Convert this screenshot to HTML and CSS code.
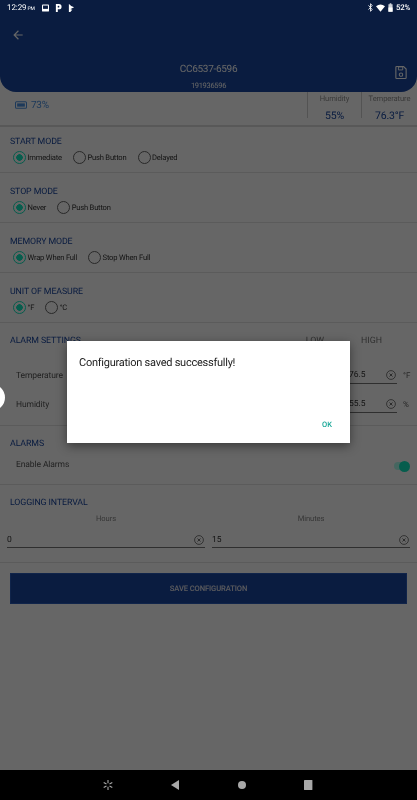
FILE: index.html
```html
<!DOCTYPE html>
<html lang="en">
<head>
<meta charset="utf-8">
<title>Configuration</title>
<link rel="stylesheet" href="styles.css">
</head>
<body>
<div class="device">
  <main class="screen">
    <header class="header">
      <div class="statusbar-space"></div>
      <svg class="back" viewBox="0 0 24 24"><path d="M20 11H7.800l5.600-5.600L12 4l-8 8 8 8 1.400-1.400L7.800 13H20z"/></svg>
      <div class="title">CC6537-6596</div>
      <div class="serial">191936596</div>
      <svg class="save" viewBox="0 0 14 16"><path d="M2 1h8l3 3v10a1 1 0 0 1-1 1H2a1 1 0 0 1-1-1V2a1 1 0 0 1 1-1z" fill="none" stroke="currentColor" stroke-width="1.300"/><path d="M4 1.500h5v3.500H4z" fill="none" stroke="currentColor" stroke-width="1.100"/><circle cx="7" cy="10.500" r="2" fill="none" stroke="currentColor" stroke-width="1.200"/></svg>
    </header>

    <section class="info">
      <div class="battery">
        <svg class="batt-icon" viewBox="0 0 14 9"><rect x="0.600" y="0.600" width="12.800" height="7.800" rx="1.200" fill="none" stroke="currentColor" stroke-width="1.200"/><rect x="2.500" y="2.600" width="9" height="3.800" fill="currentColor"/></svg>
        <span>73%</span>
      </div>
      <div class="stat stat-h"><div class="stat-label">Humidity</div><div class="stat-value">55%</div></div>
      <div class="stat stat-t"><div class="stat-label">Temperature</div><div class="stat-value">76.3°F</div></div>
    </section>

    <section class="group group-first">
      <h2 class="heading">START MODE</h2>
      <div class="radios">
        <span class="radio on">Immediate</span>
        <span class="radio">Push Button</span>
        <span class="radio">Delayed</span>
      </div>
    </section>
    <section class="group">
      <h2 class="heading">STOP MODE</h2>
      <div class="radios">
        <span class="radio on">Never</span>
        <span class="radio">Push Button</span>
      </div>
    </section>
    <section class="group">
      <h2 class="heading">MEMORY MODE</h2>
      <div class="radios">
        <span class="radio on">Wrap When Full</span>
        <span class="radio">Stop When Full</span>
      </div>
    </section>
    <section class="group">
      <h2 class="heading">UNIT OF MEASURE</h2>
      <div class="radios">
        <span class="radio on">°F</span>
        <span class="radio">°C</span>
      </div>
    </section>

    <section class="alarm">
      <div class="alarm-head">
        <h2 class="heading">ALARM SETTINGS</h2>
        <span class="col col-low">LOW</span>
        <span class="col col-high">HIGH</span>
      </div>
      <div class="alarm-row">
        <span class="row-label">Temperature</span>
        <div class="field small"><span>76.5</span><svg class="clear" viewBox="0 0 12 12"><use href="#x"/></svg></div>
        <span class="unit">°F</span>
      </div>
      <div class="alarm-row">
        <span class="row-label">Humidity</span>
        <div class="field small"><span>55.5</span><svg class="clear" viewBox="0 0 12 12"><use href="#x"/></svg></div>
        <span class="unit">%</span>
      </div>
    </section>

    <section class="alarms">
      <h2 class="heading">ALARMS</h2>
      <div class="enable">
        <span class="row-label">Enable Alarms</span>
        <span class="switch"><span class="knob"></span></span>
      </div>
    </section>

    <section class="logging">
      <h2 class="heading">LOGGING INTERVAL</h2>
      <div class="log-cols">
        <div class="log-col">
          <div class="log-label">Hours</div>
          <div class="field"><span>0</span><svg class="clear" viewBox="0 0 12 12"><use href="#x"/></svg></div>
        </div>
        <div class="log-col">
          <div class="log-label">Minutes</div>
          <div class="field"><span>15</span><svg class="clear" viewBox="0 0 12 12"><use href="#x"/></svg></div>
        </div>
      </div>
    </section>

    <div class="actions"><button class="save-btn">SAVE CONFIGURATION</button></div>

    <div class="scrim"></div>
    <div class="edge-dot"></div>
    <div class="dialog">
      <p class="dialog-text">Configuration saved successfully!</p>
      <div class="dialog-actions"><span class="ok">OK</span></div>
    </div>

    <div class="statusbar">
      <span class="clock">12:29<small>PM</small></span>
      <svg class="sb-icon" viewBox="0 0 8 8"><rect width="8" height="8" rx="1" fill="#fff"/><rect x="1.200" y="1.200" width="5.600" height="3.800" fill="#0a1c40"/></svg>
      <svg class="sb-icon" viewBox="0 0 8 9"><path d="M1 0h3.500a3 3 0 0 1 0 6H3.200v3H1z" fill="#fff"/><circle cx="4" cy="3" r="1" fill="#0a1c40"/></svg>
      <svg class="sb-icon" viewBox="0 0 8 9"><path d="M1 0l2 1.400V9H1z M3 2l4 1.500L3 5.500z M3 6l2 .5L3 8.500z" fill="#fff"/></svg>
      <span class="sb-right">
        <svg class="sb-small" viewBox="0 0 6 10"><path d="M0.600 2.500l4.500 5L3 9.500v-9l2.100 2L0.600 7.500" fill="none" stroke="#fff" stroke-width="1"/></svg>
        <svg class="sb-wifi" viewBox="0 0 12 10"><path d="M0 2.500Q6-2 12 2.500L6 10z" fill="#fff"/></svg>
        <svg class="sb-small" viewBox="0 0 6 10"><path d="M2 0h2v1h1.500v9H.5V1H2z" fill="#cfd3da"/><rect x="0.500" y="5" width="5" height="5" fill="#fff"/></svg>
        <span class="sb-pct">52%</span>
      </span>
    </div>
  </main>

  <nav class="navbar">
    <svg class="nav nav-star" viewBox="0 0 10 10"><path d="M5 0v3.200M5 6.800V10M0.700 2.500l2.800 1.600M6.500 5.900l2.800 1.600M0.700 7.500l2.800-1.600M6.500 4.100l2.800-1.600" stroke="#a8a8a8" stroke-width="1.100"/></svg>
    <svg class="nav nav-back" viewBox="0 0 8 10"><path d="M8 0v10L0 5z" fill="#a8a8a8"/></svg>
    <svg class="nav nav-home" viewBox="0 0 8 8"><circle cx="4" cy="4" r="4" fill="#a8a8a8"/></svg>
    <svg class="nav nav-recent" viewBox="0 0 8 10" preserveAspectRatio="none"><rect width="8" height="10" rx="0.600" fill="#a8a8a8"/></svg>
  </nav>
</div>

<svg class="defs" width="0" height="0">
  <defs>
    <g id="x"><circle cx="6" cy="6" r="5.300" fill="none" stroke="currentColor" stroke-width="0.900"/><path d="M4.200 4.200l3.600 3.600M7.800 4.200l-3.600 3.600" stroke="currentColor" stroke-width="1"/></g>
  </defs>
</svg>
</body>
</html>
```

FILE: styles.css
```css
* { box-sizing: border-box; }
html, body { margin: 0; padding: 0; height: 100%; }
body { font-family: Roboto, "Liberation Sans", sans-serif; text-rendering: geometricPrecision; overflow: hidden; background: #000; }
.defs { position: absolute; }
.device { width: 417px; height: 800px; display: flex; flex-direction: column; filter: blur(0.45px); }
.screen { position: relative; flex: 1; background: #fff; overflow: hidden; }

.header {
  position: relative; height: 92px; background: #1a47a0; border-radius: 0 0 16px 16px;
  display: flex; flex-direction: column; align-items: center;
}
.statusbar-space { height: 62px; }
.back { position: absolute; left: 11px; top: 28px; width: 14px; height: 14px; fill: #fff; }
.title { font-size: 10px; line-height: 16px; letter-spacing: -0.3px; color: #fff; }
.serial { font-size: 7.500px; line-height: 10px; margin-top: 3px; letter-spacing: -0.3px; color: #fff; }
.save { position: absolute; right: 10px; top: 65px; width: 12px; height: 15px; color: #fff; }

.info { height: 35px; display: flex; border-bottom: 2px solid #dcdcdc; }
.battery { flex: 1; display: flex; align-items: center; gap: 4px; padding: 0 0 7px 15px; color: #4a90e0; font-size: 10px; letter-spacing: -0.3px; }
.batt-icon { width: 12px; height: 8px; }
.stat { border-left: 1px solid #d0d0d0; text-align: center; height: 26px; }
.stat-h { width: 54px; }
.stat-t { width: 56px; }
.stat-label { font-size: 7.600px; line-height: 12px; margin-top: 1px; letter-spacing: -0.1px; color: #909090; }
.stat-value { font-size: 10.500px; line-height: 14px; margin-top: 4px; letter-spacing: -0.2px; color: #1a47a0; }

.group { height: 50px; padding: 11.500px 10px 0; border-bottom: 1px solid #e4e4e4; }
.group-first { height: 46px; padding-top: 7.500px; }
.heading { margin: 0; font-size: 8.800px; line-height: 14px; font-weight: 400; letter-spacing: -0.1px; color: #1a47a0; }
.radios { display: flex; gap: 11px; margin-top: 0.500px; padding-left: 3px; height: 16px; align-items: center; }
.radio { display: flex; align-items: center; gap: 1.500px; font-size: 7.600px; letter-spacing: -0.2px; color: #333; }
.radio::before { content: ""; width: 11px; height: 11px; border-radius: 50%; border: 1px solid #666; flex: none; }
.radio.on::before { border-color: #10e8c0; background: radial-gradient(circle, #10e8c0 0 3px, transparent 3.500px); }

.alarm { height: 103px; padding: 11px 8px 0 10px; border-bottom: 1px solid #e4e4e4; }
.alarm-head { display: flex; align-items: center; height: 14px; padding-right: 2px; }
.alarm-head .heading { flex: 1; }
.col { font-size: 8.800px; color: #777; }
.col-low { margin-right: 37px; }
.col-high { margin-right: 25px; }
.alarm-row { display: flex; align-items: center; height: 29px; padding-left: 6px; }
.alarm-head + .alarm-row { margin-top: 13px; }
.row-label { flex: 1; font-size: 8.500px; letter-spacing: -0.1px; color: #555; }
.field { display: flex; align-items: center; justify-content: space-between; height: 17px; border-bottom: 1px solid #777; font-size: 8.500px; color: #333; }
.field.small { width: 60px; padding-left: 12px; }
.clear { width: 10px; height: 10px; color: #555; flex: none; }
.field .clear { margin-right: 1px; }
.unit { width: 12px; padding-left: 6px; font-size: 8px; color: #666; }

.alarms { height: 59px; padding: 11px 10px 0; border-bottom: 1px solid #e4e4e4; }
.enable { display: flex; align-items: center; height: 16px; margin-top: 6px; padding-left: 6px; }
.switch { position: relative; display: block; width: 11px; height: 8px; margin: 2px 2px 0 0; border-radius: 4px; background: #b0fff0; }
.knob { position: absolute; left: 5px; top: -1.500px; width: 11px; height: 11px; border-radius: 50%; background: #10e8c0; }

.logging { height: 78px; padding: 11px 7px 0; border-bottom: 1px solid #e4e4e4; }
.logging .heading { padding-left: 3px; }
.log-cols { display: flex; gap: 7px; margin-top: 3px; }
.log-col { flex: 1; }
.log-label { font-size: 7.600px; line-height: 12px; letter-spacing: -0.1px; text-align: center; color: #888; margin-bottom: 5px; }
.log-col .field { height: 18px; padding-top: 3px; border-bottom-width: 1.500px; }

.actions { padding: 10px 10px 0; }
.save-btn { display: block; width: 397px; height: 31px; padding: 0; background: #1a47a0; color: #e0e0e8; border: 1px solid #2a5ab8; font: 500 7.600px Roboto, sans-serif; letter-spacing: -0.1px; text-rendering: geometricPrecision; }

.scrim { position: absolute; inset: 0; background: rgba(0, 0, 0, 0.6); }
.edge-dot { position: absolute; left: -22px; top: 384px; width: 27px; height: 27px; border-radius: 50%; background: #fff; }
.dialog {
  position: absolute; left: 67px; top: 341px; width: 283px; height: 102px; background: #fff;
  padding: 14px 12px 0; display: flex; flex-direction: column; justify-content: space-between;
  box-shadow: 0 3px 10px rgba(0, 0, 0, 0.45);
}
.dialog-text { margin: 0; font-size: 11px; line-height: 16px; letter-spacing: -0.25px; color: #222; }
.dialog-actions { display: flex; justify-content: flex-end; padding: 0 6px 14px 0; }
.ok { font-size: 7.500px; font-weight: 500; color: #1aa898; }

.statusbar { position: absolute; left: 0; right: 0; top: 0; height: 15px; padding: 0 7px; display: flex; align-items: center; gap: 6px; color: #fff; font-size: 8px; }
.clock { margin-right: 1px; letter-spacing: -0.1px; }
.clock small { font-size: 5px; margin-left: 1px; }
.sb-icon { width: 7px; height: 8px; }
.sb-right { margin-left: auto; display: flex; align-items: center; gap: 3px; }
.sb-pct { font-size: 7.800px; font-weight: 500; letter-spacing: -0.2px; }
.sb-small { width: 5px; height: 9px; }
.sb-wifi { width: 9px; height: 8px; }

.navbar { height: 30px; flex: none; background: #000; display: flex; align-items: center; }
.nav { flex: none; }
.nav-star { width: 10px; height: 10px; margin-left: 103px; }
.nav-back { width: 8px; height: 10px; margin-left: 58px; }
.nav-home { width: 8px; height: 8px; margin-left: 58.700px; }
.nav-recent { width: 8.400px; height: 10px; margin-left: 58.600px; }
```
